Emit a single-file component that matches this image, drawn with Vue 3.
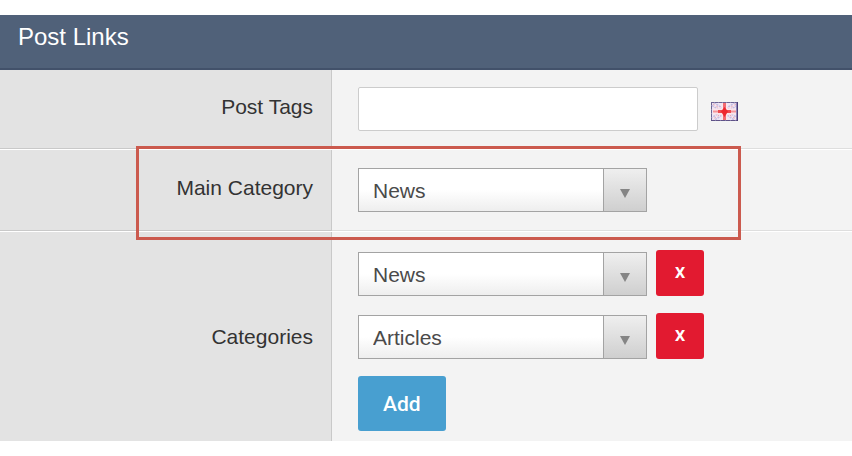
<script setup>
import { ref } from 'vue'

const tags = ref('')
const mainCategory = ref('News')
const options = ['News', 'Articles']
const categories = ref([
  { id: 1, value: 'News' },
  { id: 2, value: 'Articles' },
])
let nextId = 3

function addCategory() {
  categories.value.push({ id: nextId++, value: 'News' })
}
function removeCategory(id) {
  categories.value = categories.value.filter((c) => c.id !== id)
}
</script>

<template>
  <form class="panel" @submit.prevent>
    <h2 class="panel-title">Post Links</h2>

    <div class="row">
      <label class="caption" for="post-tags">Post Tags</label>
      <div class="field">
        <div class="line">
          <input id="post-tags" v-model="tags" class="text-input" type="text" />
          <svg class="flag" viewBox="0 0 27 19" aria-hidden="true">
            <rect width="27" height="19" fill="#eee4f3" />
            <path d="M2 2L25 17M25 2L2 17" stroke="#c3bce2" stroke-width="5" stroke-dasharray="2 1" />
            <path d="M2 2L25 17M25 2L2 17" stroke="#f8e6ee" stroke-width="2" />
            <path d="M2 2L25 17M25 2L2 17" stroke="#e3a5b5" stroke-width="1" stroke-dasharray="2 2" />
            <path d="M13.500 1V18M2 9.500H25" stroke="#fae4ea" stroke-width="6" />
            <path d="M2 9.500H25" stroke="#f4949a" stroke-width="2" />
            <path d="M13.500 1V18" stroke="#f26a72" stroke-width="3" />
            <path d="M7 9.500H20" stroke="#ee4a50" stroke-width="3" />
            <path d="M13.500 5L17 9.500L13.500 15L10 9.500Z" fill="#ee2830" />
            <path d="M0 .5H27M.5 0V19" stroke="#8f88b0" />
            <path d="M0 .5H27M.5 0V19" stroke="#6c6494" stroke-dasharray="3 1" />
            <path d="M0 18.500H27" stroke="#8278a4" />
            <path d="M0 18.500H27" stroke="#5f5288" stroke-dasharray="4 1" />
            <path d="M26.500 0V19" stroke="#4a3d78" />
            <path d="M25.500 1V18" stroke="#9088b8" />
          </svg>
        </div>
      </div>
    </div>

    <div class="row highlighted">
      <label class="caption" for="main-category">Main Category</label>
      <div class="field">
        <div class="line">
          <span class="select-box">
            <select id="main-category" v-model="mainCategory">
              <option v-for="o in options" :key="o">{{ o }}</option>
            </select>
            <span class="arrow">
              <svg viewBox="0 0 10 9" aria-hidden="true"><path d="M0 0H10L5 9Z" fill="#858585" /></svg>
            </span>
          </span>
        </div>
      </div>
    </div>

    <div class="row categories" role="group" aria-labelledby="categories-label">
      <span id="categories-label" class="caption">Categories</span>
      <div class="field">
        <div v-for="c in categories" :key="c.id" class="line">
          <span class="select-box">
            <select v-model="c.value" aria-labelledby="categories-label">
              <option v-for="o in options" :key="o">{{ o }}</option>
            </select>
            <span class="arrow">
              <svg viewBox="0 0 10 9" aria-hidden="true"><path d="M0 0H10L5 9Z" fill="#858585" /></svg>
            </span>
          </span>
          <button class="remove" type="button" @click="removeCategory(c.id)">x</button>
        </div>
        <button class="add" type="button" @click="addCategory">Add</button>
      </div>
    </div>
  </form>
</template>

<style>
body {
  background: #fff;
}
</style>

<style scoped>
.panel {
  margin: 15px 0;
  font-family: "Liberation Sans", Arial, sans-serif;
  font-size: 21px;
  line-height: 24px;
  color: #333;
  background: #f3f3f3;
}
.panel-title {
  margin: 0;
  padding: 10px 18px 19px;
  border-bottom: 2px solid #42516a;
  background: #506179;
  color: #fff;
  font-size: 24px;
  font-weight: 400;
  line-height: 24px;
}
.row {
  position: relative;
  display: grid;
  grid-template-columns: 332px 1fr;
  border-bottom: 1px solid #fff;
}
.caption {
  display: flex;
  align-items: center;
  justify-content: flex-end;
  padding: 0 18px 4px;
  border-right: 1px solid #c9c9c9;
  border-bottom: 1px solid #c9c9c9;
  background: #e3e3e3;
}
.field {
  display: flex;
  flex-direction: column;
  align-items: flex-start;
  gap: 17px;
  padding: 17px 26px;
  border-bottom: 1px solid #dedede;
}
.highlighted .field {
  padding: 18px 26px;
}
.categories {
  border-bottom: 0;
}
.categories .caption {
  padding-bottom: 0;
  border-bottom: 0;
}
.categories .field {
  padding: 18px 26px 10px;
  border-bottom: 0;
}
.highlighted::after {
  content: "";
  position: absolute;
  z-index: 1;
  top: -4px;
  bottom: -9px;
  left: 136px;
  width: 605px;
  box-sizing: border-box;
  border: 3px solid #cb5a4e;
  pointer-events: none;
}
.line {
  display: flex;
  align-items: flex-end;
  gap: 9px;
}
.text-input {
  width: 340px;
  height: 44px;
  box-sizing: border-box;
  padding: 0 14px;
  border: 1px solid #ccc;
  border-radius: 2px;
  background: #fff;
  font: inherit;
  color: #444;
}
.flag {
  width: 27px;
  height: 19px;
  margin: 0 0 10px 4px;
}
.select-box {
  display: flex;
  width: 289px;
  height: 44px;
  box-sizing: border-box;
  position: relative;
  border: 1px solid #a3a3a3;
  background: linear-gradient(#fff 50%, #eee);
}
.select-box select {
  flex: 1;
  appearance: none;
  padding: 2px 14px 0;
  border: 0;
  background: transparent;
  font: inherit;
  color: #4a4a4a;
}
.arrow {
  position: absolute;
  top: 0;
  right: 0;
  bottom: 0;
  width: 43px;
  box-sizing: border-box;
  display: flex;
  align-items: center;
  justify-content: center;
  padding-top: 6px;
  border-left: 1px solid #a3a3a3;
  background: linear-gradient(#efefef, #cfcfcf);
  pointer-events: none;
}
.arrow svg {
  width: 10px;
  height: 9px;
}
.remove,
.add {
  border: 0;
  border-radius: 3px;
  font: inherit;
  font-family: Roboto, "Liberation Sans", sans-serif;
  font-weight: 500;
  color: #fff;
}
.remove {
  width: 48px;
  height: 46px;
  padding: 0 0 4px;
  background: #e21a30;
}
.add {
  height: 55px;
  padding: 0 25px;
  background: #489fd0;
}
</style>
